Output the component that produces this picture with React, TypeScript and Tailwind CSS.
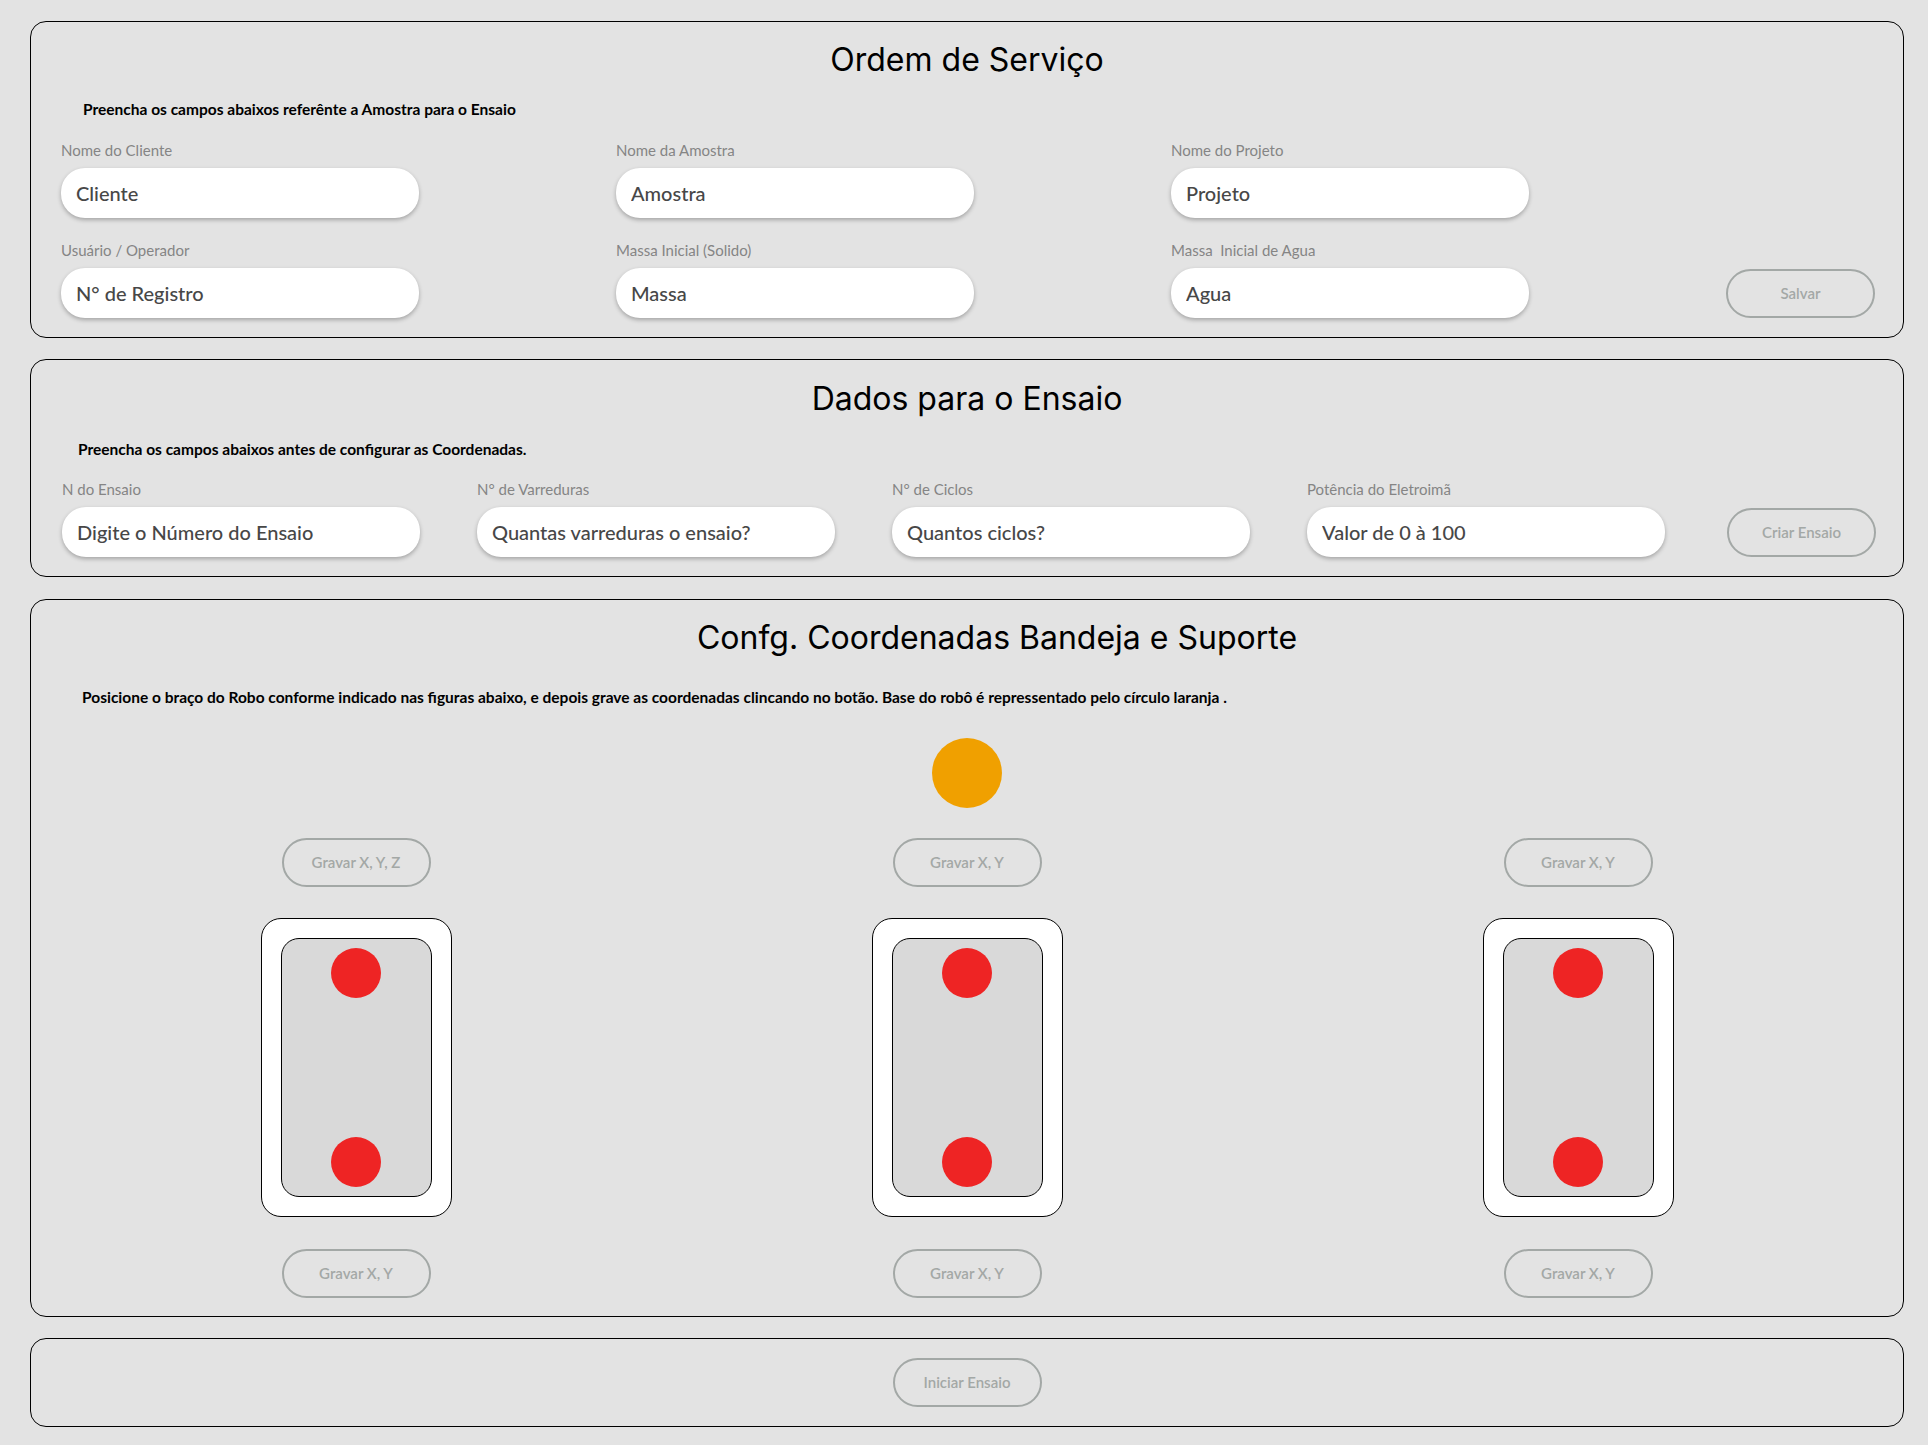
const sans = "font-['Lato','Open_Sans',sans-serif]";

function Field({ label, placeholder }: { label: string; placeholder: string }) {
  return (
    <div className="flex flex-col">
      <label className={`${sans} text-[15px] leading-[18px] text-[#858585] mb-[9px] whitespace-pre`}>{label}</label>
      <input
        placeholder={placeholder}
        className={`${sans} h-[50px] w-[358px] rounded-[24px] bg-white pl-[15px] text-[20px] font-medium text-[#474747] placeholder:text-[#474747] shadow-[0_2px_4px_rgba(0,0,0,0.28)] outline-none`}
      />
    </div>
  );
}

function OutlineButton({ children }: { children: React.ReactNode }) {
  return (
    <button className={`${sans} h-[49px] w-[149px] rounded-full border-2 border-[#a3a8a6] text-[15px] font-semibold text-[#a3a8a6]`}>
      {children}
    </button>
  );
}

function Tray() {
  return (
    <div className="w-[191px] h-[299px] rounded-[20px] border border-black bg-white p-[19px]">
      <div className="h-full rounded-[18px] border border-black bg-[#d9d9d9] flex flex-col items-center justify-between py-[9px]">
        <div className="w-[50px] h-[50px] rounded-full bg-[#ee2424]" />
        <div className="w-[50px] h-[50px] rounded-full bg-[#ee2424]" />
      </div>
    </div>
  );
}

function Title({ children, className = "" }: { children: React.ReactNode; className?: string }) {
  return (
    <h1 className={`font-['Inter',sans-serif] text-[32px] leading-[36px] text-black text-center ${className}`}>{children}</h1>
  );
}

export default function App() {
  return (
    <div className="min-h-screen bg-[#e3e3e3] pt-[21px] pb-[19px] pl-[30px] pr-[24px] flex flex-col">
      {/* Ordem de Serviço */}
      <section className="h-[317px] rounded-[16px] border border-black">
        <Title className="mt-[20px]">Ordem de Serviço</Title>
        <p className={`${sans} mt-[21px] pl-[52px] text-[15.5px] leading-[20px] font-bold text-black`}>
          Preencha os campos abaixos referênte a Amostra para o Ensaio
        </p>
        <div className="mt-[22px] pl-[30px] grid grid-cols-[555px_555px_555px_auto] gap-y-[23px] items-end">
          <Field label="Nome do Cliente" placeholder="Cliente" />
          <Field label="Nome da Amostra" placeholder="Amostra" />
          <Field label="Nome do Projeto" placeholder="Projeto" />
          <div />
          <Field label="Usuário / Operador" placeholder="N° de Registro" />
          <Field label="Massa Inicial (Solido)" placeholder="Massa" />
          <Field label="Massa  Inicial de Agua" placeholder="Agua" />
          <OutlineButton>Salvar</OutlineButton>
        </div>
      </section>

      {/* Dados para o Ensaio */}
      <section className="mt-[21px] h-[218px] rounded-[16px] border border-black">
        <Title className="mt-[21px]">Dados para o Ensaio</Title>
        <p className={`${sans} mt-[22px] pl-[47px] text-[15.5px] leading-[20px] font-bold text-black`}>
          Preencha os campos abaixos antes de configurar as Coordenadas.
        </p>
        <div className="mt-[21px] pl-[31px] grid grid-cols-[415px_415px_415px_420px_auto] items-end">
          <Field label="N do Ensaio" placeholder="Digite o Número do Ensaio" />
          <Field label="N° de Varreduras" placeholder="Quantas varreduras o ensaio?" />
          <Field label="N° de Ciclos" placeholder="Quantos ciclos?" />
          <Field label="Potência do Eletroimã" placeholder="Valor de 0 à 100" />
          <OutlineButton>Criar Ensaio</OutlineButton>
        </div>
      </section>

      {/* Coordenadas */}
      <section className="mt-[22px] h-[718px] rounded-[16px] border border-black">
        <Title className="mt-[20px] pl-[60px]">Confg. Coordenadas Bandeja e Suporte</Title>
        <p className={`${sans} mt-[31px] pl-[51px] text-[15.5px] leading-[20px] font-bold text-black`}>
          Posicione o braço do Robo conforme indicado nas figuras abaixo, e depois grave as coordenadas clincando no botão. Base do robô é repressentado pelo círculo laranja .
        </p>
        <div className="mt-[31px] flex justify-center">
          <div className="w-[70px] h-[70px] rounded-full bg-[#f0a000]" />
        </div>
        <div className="mt-[30px] grid grid-cols-[611px_611px_611px] justify-center">
          {["Gravar X, Y, Z", "Gravar X, Y", "Gravar X, Y"].map((top, i) => (
            <div key={i} className="flex flex-col items-center">
              <OutlineButton>{top}</OutlineButton>
              <div className="mt-[31px]">
                <Tray />
              </div>
              <div className="mt-[32px]">
                <OutlineButton>Gravar X, Y</OutlineButton>
              </div>
            </div>
          ))}
        </div>
      </section>

      {/* Iniciar */}
      <section className="mt-[21px] h-[89px] rounded-[16px] border border-black flex justify-center pt-[19px]">
        <OutlineButton>Iniciar Ensaio</OutlineButton>
      </section>
    </div>
  );
}
